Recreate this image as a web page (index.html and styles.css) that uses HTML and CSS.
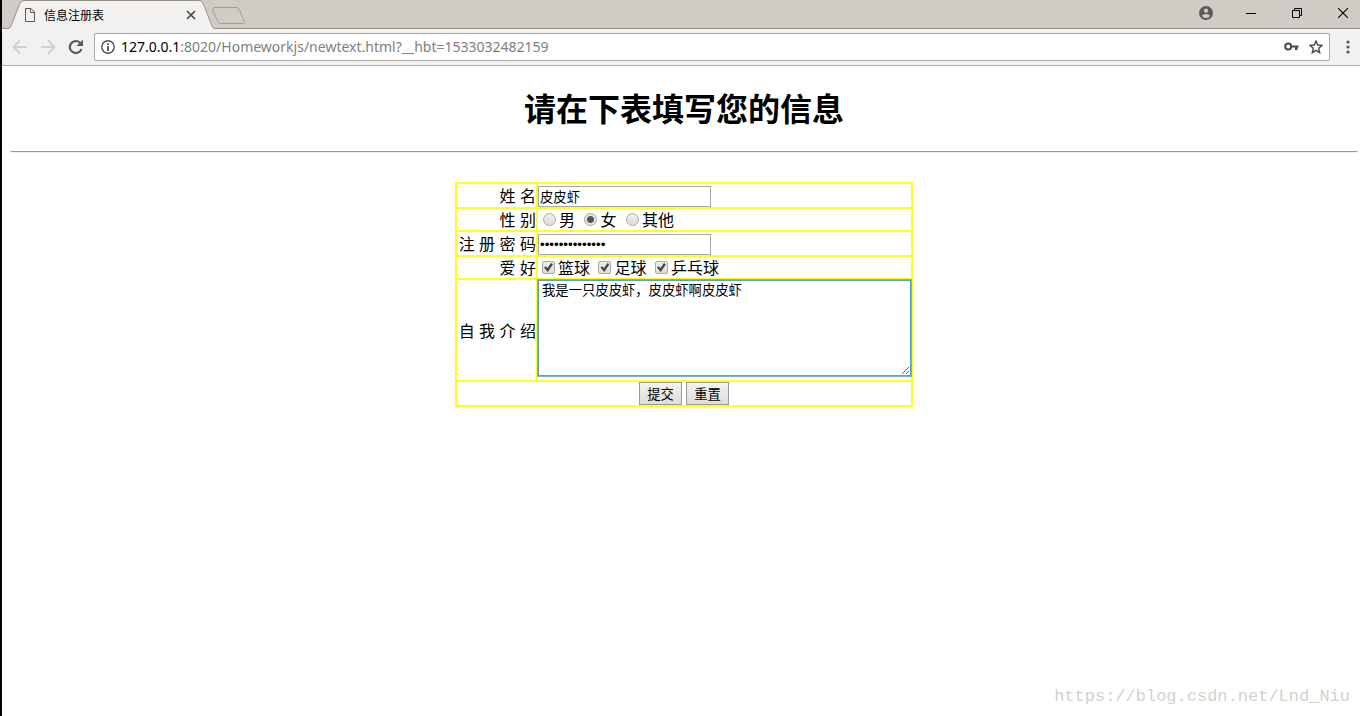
FILE: index.html
```
<!DOCTYPE html>
<html lang="zh-CN">
<head>
<meta charset="utf-8">
<title>信息注册表</title>
<link rel="stylesheet" href="styles.css">
</head>
<body>
<div class="window">
  <header class="tabstrip">
    <div class="tab">
      <svg class="tab-shape" width="208" height="29" viewBox="0 0 208 29" aria-hidden="true"><path d="M0 29 L2 27.500 L12 3 Q13 .5 16 .5 H191 Q194 .5 195 3 L205 27 L207 29Z" fill="#f2f1f0"/><path d="M0 28.500 Q2 28.500 3 26 L12 3 Q13 .5 16 .5 H191 Q194 .5 195 3 L204 26 Q205 28.500 207 28.500" fill="none" stroke="#969188"/></svg>
      <svg class="page-icon" width="12" height="14" viewBox="0 0 12 14" fill="none" stroke="#5a5a5a" aria-hidden="true"><path d="M1.500 .5H7L10.500 4V13.500H1.500ZM6.500 .5V4.500H10.500"/></svg>
      <span class="tab-title">信息注册表</span>
      <button class="tab-close" aria-label="关闭标签页"><svg width="10" height="10" viewBox="0 0 10 10" stroke="#444" stroke-width="1.600"><path d="M1 1L9 9M9 1L1 9"/></svg></button>
    </div>
    <button class="new-tab" aria-label="新标签页"><svg width="36" height="19" viewBox="0 0 36 19"><path d="M3 1.500H24Q26 1.500 27 3L32.500 16Q33 17.500 31.500 17.500H9Q7 17.500 6 16L.7 4Q0 1.500 3 1.500Z" fill="#d0ccc5" stroke="#a29d95"/></svg></button>
    <div class="window-controls">
      <button aria-label="用户"><svg width="14" height="14" viewBox="0 0 14 14"><circle cx="7" cy="7" r="7" fill="#5d5b58"/><circle cx="7" cy="4.700" r="2.100" fill="#d0ccc5"/><path d="M2.800 9.800Q4.500 8 7 8T11.200 9.800Q9.800 12 7 12T2.800 9.800Z" fill="#d0ccc5"/></svg></button>
      <button aria-label="最小化"><svg width="10" height="10" viewBox="0 0 10 10" stroke="#000"><path d="M0 5.500H10"/></svg></button>
      <button aria-label="还原"><svg width="10" height="10" viewBox="0 0 10 10" fill="none" stroke="#000"><path d="M.5 2.500H7.500V9.500H.5ZM2.500 2.500V.5H9.500V7.500H7.500"/></svg></button>
      <button aria-label="关闭"><svg width="10" height="10" viewBox="0 0 10 10" stroke="#000" stroke-width="1.100"><path d="M0 0L10 10M10 0L0 10"/></svg></button>
    </div>
  </header>
  <nav class="toolbar">
    <button aria-label="后退"><svg width="16" height="16" viewBox="0 0 16 16" fill="none" stroke="#d2d1cf" stroke-width="2"><path d="M15 8H2.500M8 1.500L1.500 8L8 14.500"/></svg></button>
    <button aria-label="前进"><svg width="16" height="16" viewBox="0 0 16 16" fill="none" stroke="#d2d1cf" stroke-width="2"><path d="M1 8H13.500M8 1.500L14.500 8L8 14.500"/></svg></button>
    <button aria-label="重新加载"><svg width="16" height="16" viewBox="0 0 16 16"><path d="M13.500 10A6 6 0 1 1 12 3.700" fill="none" stroke="#5a5a5a" stroke-width="2.200"/><path d="M15 .5V7H8.500Z" fill="#5a5a5a"/></svg></button>
    <div class="address">
      <svg width="14" height="14" viewBox="0 0 14 14" aria-hidden="true"><circle cx="7" cy="7" r="6.200" fill="none" stroke="#505050" stroke-width="1.400"/><path d="M6.100 3.300H7.900V5H6.100ZM6.100 6H7.900V11H6.100Z" fill="#505050"/></svg>
      <div class="url" role="textbox" aria-label="地址" contenteditable="true" spellcheck="false"><span class="host">127.0.0.1</span>:8020/Homeworkjs/newtext.html?__hbt=1533032482159</div>
      <button aria-label="密码"><svg width="15" height="10" viewBox="0 0 15 10"><circle cx="4.200" cy="4.500" r="3" fill="none" stroke="#4b4b46" stroke-width="2"/><path d="M7 3.500H14.500V5.500H13.500V8H11V5.500H7Z" fill="#4b4b46"/></svg></button>
      <button aria-label="收藏"><svg width="14" height="14" viewBox="0 0 14 14"><path d="M7 1L8.700 5L13 5.400L9.700 8.200L10.700 12.700L7 10.300L3.300 12.700L4.300 8.200L1 5.400L5.300 5Z" fill="none" stroke="#4b4b46" stroke-width="1.400"/></svg></button>
    </div>
    <button aria-label="菜单"><svg width="4" height="14" viewBox="0 0 4 14" fill="#5a5a5a"><circle cx="2" cy="2" r="1.600"/><circle cx="2" cy="7" r="1.600"/><circle cx="2" cy="12" r="1.600"/></svg></button>
  </nav>
  <main class="page">
    <h1>请在下表填写您的信息</h1>
    <hr>
    <form>
      <table class="form-table">
        <tr class="row-field"><th><label for="name">姓 名</label></th><td><input class="field" id="name" type="text" value="皮皮虾"></td></tr>
        <tr class="row-choice"><th>性 别</th><td>
          <input type="radio" name="sex" id="male"><label for="male">男</label>
          <input type="radio" name="sex" id="female" checked><label for="female">女</label>
          <input type="radio" name="sex" id="other"><label for="other">其他</label></td></tr>
        <tr class="row-field"><th><label for="pwd">注 册 密 码</label></th><td><input class="field" id="pwd" type="password" value="12345678901234"></td></tr>
        <tr class="row-choice"><th>爱 好</th><td>
          <input type="checkbox" id="basketball" checked><label for="basketball">篮球</label>
          <input type="checkbox" id="football" checked><label for="football">足球</label>
          <input type="checkbox" id="pingpong" checked><label for="pingpong">乒乓球</label></td></tr>
        <tr class="row-intro"><th><label for="intro">自 我 介 绍</label></th><td><textarea id="intro" spellcheck="false">我是一只皮皮虾，皮皮虾啊皮皮虾</textarea></td></tr>
        <tr class="row-field"><td colspan="2"><div class="actions"><button type="submit">提交</button><button type="reset">重置</button></div></td></tr>
      </table>
    </form>
  </main>
  <div class="watermark">https://blog.csdn.net/Lnd_Niu</div>
</div>
</body>
</html>
```
FILE: styles.css
```
* { box-sizing: border-box; }
body {
  margin: 0;
  background: #fff;
  color: #000;
  font-family: "Liberation Sans", "Noto Sans CJK SC", sans-serif;
}
.window {
  position: relative;
  min-height: 100vh;
  border-left: 2px solid #000;
}
.tabstrip button, .toolbar button {
  display: flex;
  padding: 0;
  border: 0;
  background: none;
}
.tabstrip {
  display: flex;
  height: 29px;
  padding-left: 6px;
  background: #d0ccc5;
  border-bottom: 1px solid #969188;
}
.tab {
  position: relative;
  display: flex;
  align-items: center;
  width: 204px;
  height: 29px;
  padding: 0 16px;
}
.tab-shape { position: absolute; left: 0; top: 0; }
.page-icon, .tab-close { position: relative; }
.tab-title {
  position: relative;
  flex: 1;
  margin-left: 8px;
  font-size: 12px;
}
.new-tab { align-self: flex-start; margin-top: 6px; }
.window-controls {
  display: flex;
  align-items: center;
  gap: 36px;
  margin-left: auto;
  padding: 0 12px 2px 0;
}
.window-controls button:first-child { margin-right: -3px; }
.toolbar {
  display: flex;
  align-items: center;
  gap: 12px;
  height: 37px;
  padding: 0 10px;
  background: #f2f1f0;
  border-bottom: 1px solid #b4b1ab;
}
.address {
  display: flex;
  flex: 1;
  align-items: center;
  gap: 10px;
  height: 28px;
  margin: 0 4px 0 -2px;
  padding: 0 6px;
  background: #fff;
  border: 1px solid #a9a8a6;
  border-radius: 2px;
}
.url {
  flex: 1;
  margin-left: -4px;
  color: #80807c;
  font: 14px/20px "Noto Sans", sans-serif;
  white-space: nowrap;
  outline: none;
}
.host { color: #000; }
.page { padding: 21px 2px 8px 8px; }
h1 {
  margin: 0 0 17px;
  font-size: 32px;
  line-height: 47px;
  text-align: center;
}
hr {
  height: 2px;
  margin: 0 0 29px;
  border: 1px solid #eee;
  border-top-color: #9a9a92;
}
.form-table {
  width: 458px;
  margin: 0 auto;
  border-collapse: collapse;
  table-layout: fixed;
  line-height: 19px;
}
.form-table th, .form-table td {
  padding: 0;
  border: 2px solid #ff2;
}
.form-table th {
  width: 81px;
  padding-top: 2px;
  font-weight: normal;
  text-align: right;
  white-space: nowrap;
}
.row-field { height: 25px; }
.row-choice { height: 23px; }
.row-intro { height: 102px; }
.form-table .row-field td { vertical-align: bottom; }
.form-table .row-intro td { vertical-align: top; }
.form-table .row-choice td { padding-top: 2px; }
.field {
  display: block;
  width: 173px;
  height: 21px;
  padding: 1px;
  border: 1px solid #a9a9a9;
  font-family: inherit;
}
input[type="radio"], input[type="checkbox"] {
  appearance: none;
  width: 13px;
  height: 13px;
  border: 1px solid #aaa;
  background: linear-gradient(#eee, #ddd);
  vertical-align: baseline;
}
input[type="radio"] { margin: 0 3px 0 5px; border-radius: 50%; }
input[type="radio"]:checked {
  background: radial-gradient(circle, #555 0 3px, #e4e4e4 4px);
}
input[type="checkbox"] { margin: 0 3px 0 4px; border-radius: 2px; }
input[type="checkbox"]:checked::before {
  content: "";
  display: block;
  width: 9px;
  height: 9px;
  margin: 1px;
  background: #444;
  clip-path: polygon(0 50%, 20% 35%, 38% 58%, 78% 0, 100% 14%, 42% 100%);
}
textarea {
  position: relative;
  display: block;
  width: 100%;
  height: 96px;
  padding: 0 3px;
  border: 1px solid #5b9dd9;
  box-shadow: 0 0 0 1px #6fb0e6;
  outline: none;
  font-family: "Noto Sans CJK SC", sans-serif;
  line-height: 18px;
}
.actions {
  display: flex;
  justify-content: center;
  gap: 4px;
}
.actions button {
  width: 43px;
  height: 23px;
  padding: 0;
  border: 1px solid #999;
  background: linear-gradient(#f4f4f4, #dddcd9);
  font-family: inherit;
}
.watermark {
  position: absolute;
  right: 10px;
  bottom: 7px;
  color: #d2d2cd;
  font: 17px/24px "Liberation Mono", monospace;
}
```
